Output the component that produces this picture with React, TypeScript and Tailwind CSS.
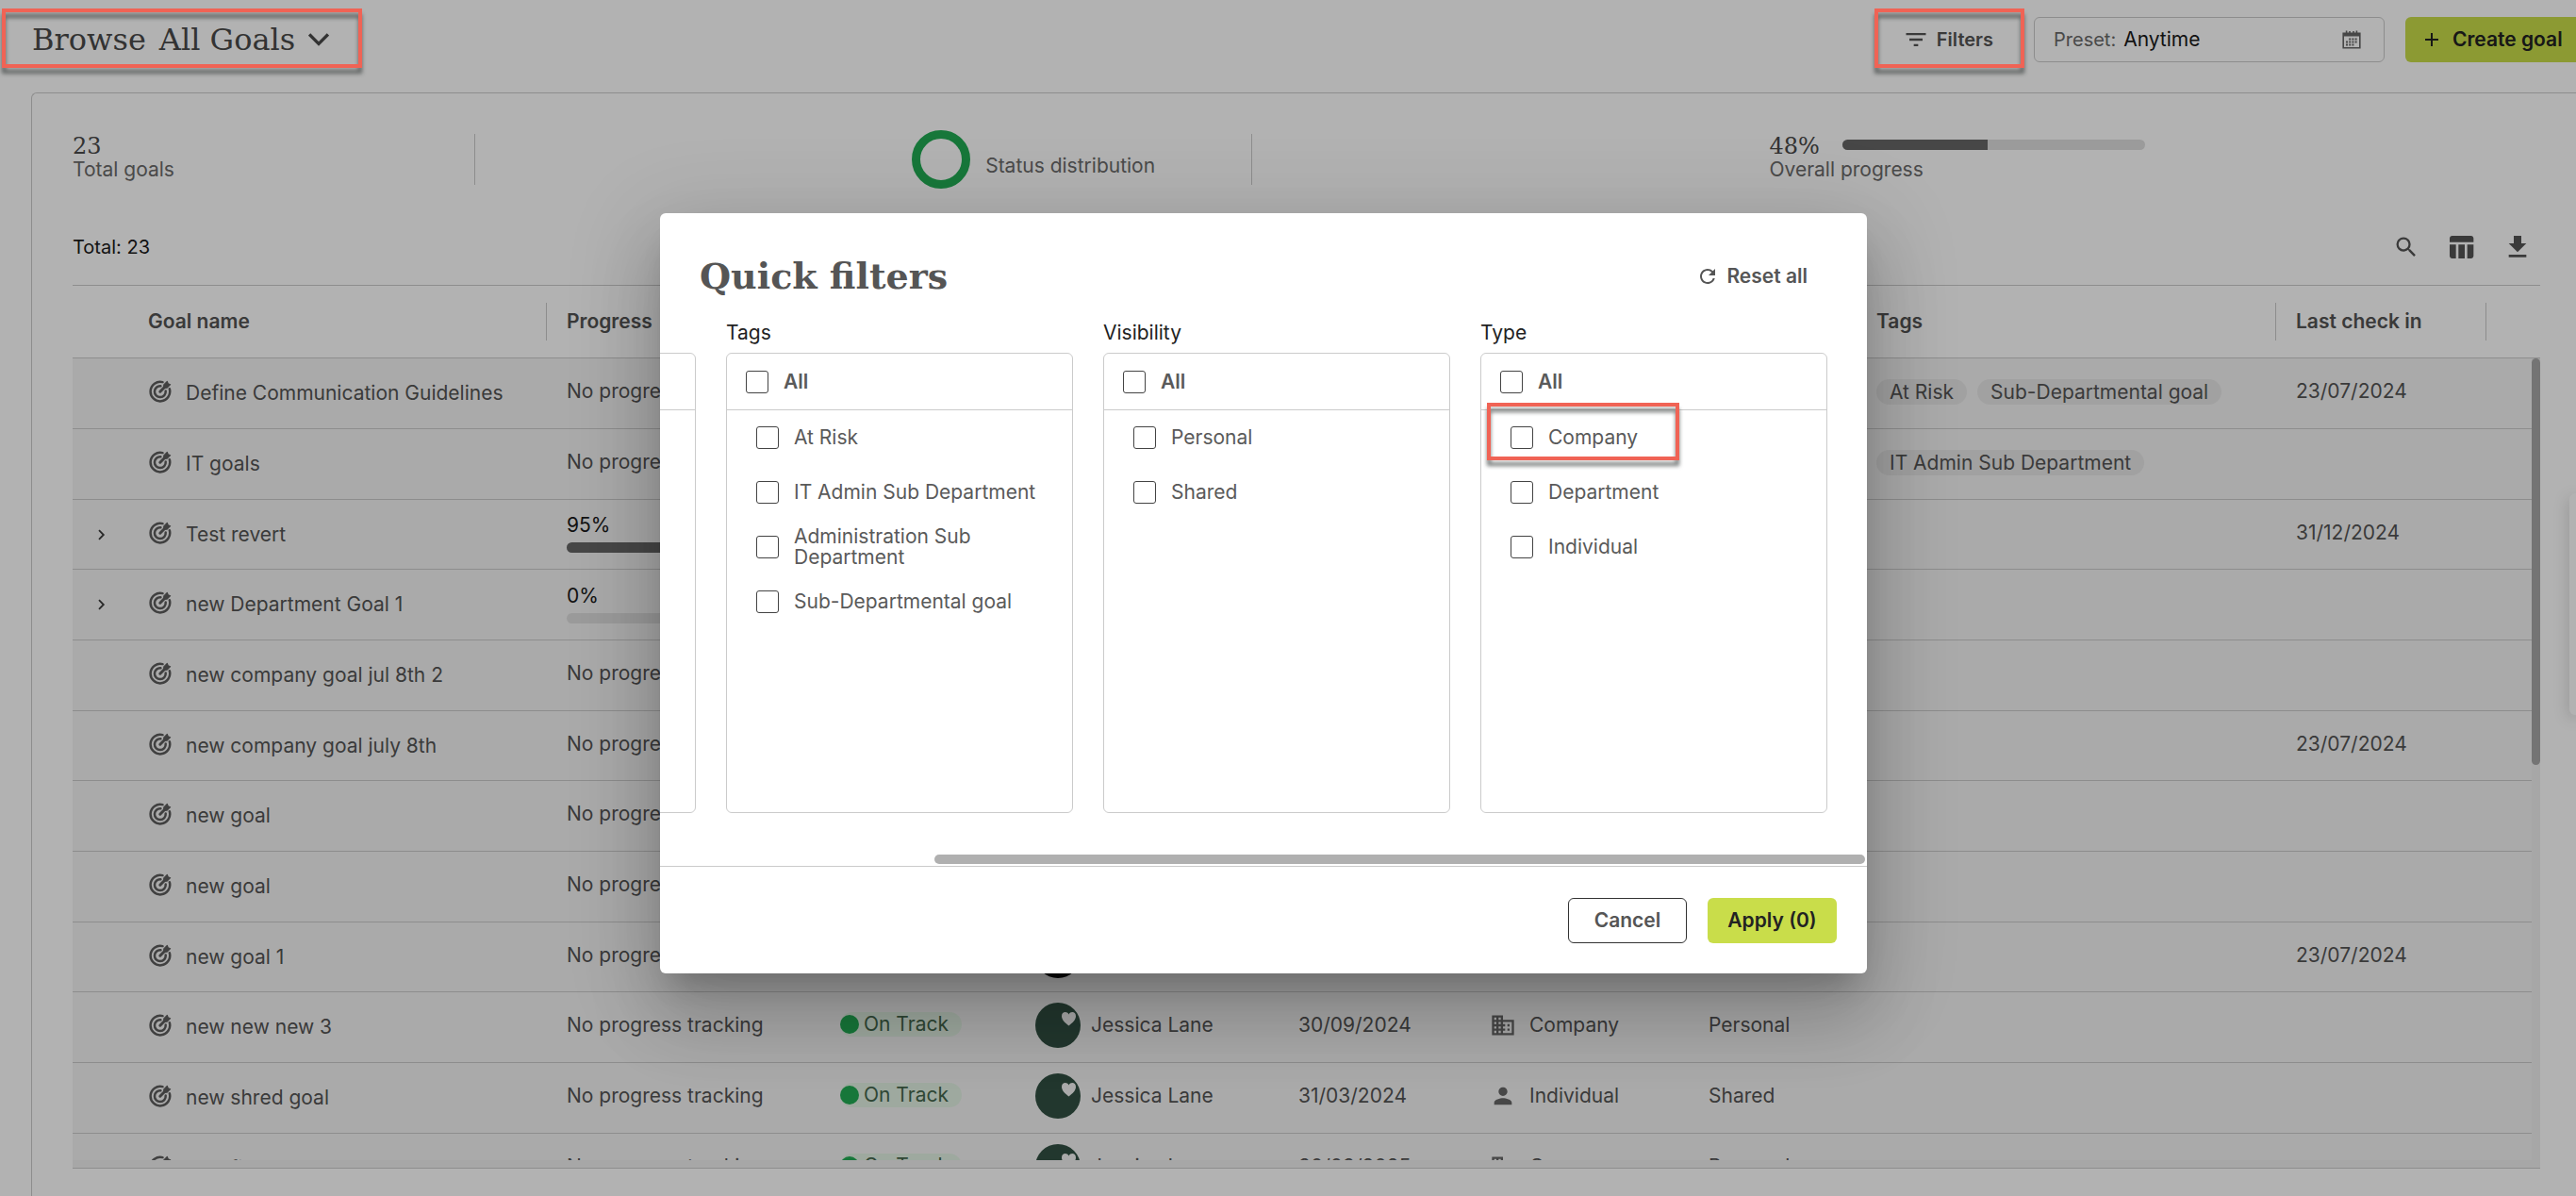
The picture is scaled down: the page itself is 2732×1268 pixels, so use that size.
import React from 'react';
import {
  MdAdd,
  MdBusiness,
  MdFileDownload,
  MdFilterList,
  MdPerson,
  MdRefresh,
  MdSearch,
  MdTableChart,
} from 'react-icons/md';

type Goal = {
  name: string;
  progress?: number;
  expandable?: boolean;
  owner?: 'dark' | 'green';
  status?: string;
  dueDate?: string;
  type?: 'Company' | 'Individual';
  visibility?: string;
  tags?: string[];
  lastCheckIn?: string;
};

const GOALS: Goal[] = [
  { name: 'Define Communication Guidelines', tags: ['At Risk', 'Sub-Departmental goal'], lastCheckIn: '23/07/2024' },
  { name: 'IT goals', tags: ['IT Admin Sub Department'] },
  { name: 'Test revert', progress: 95, expandable: true, lastCheckIn: '31/12/2024' },
  { name: 'new Department Goal 1', progress: 0, expandable: true },
  { name: 'new company goal jul 8th 2' },
  { name: 'new company goal july 8th', lastCheckIn: '23/07/2024' },
  { name: 'new goal' },
  { name: 'new goal' },
  { name: 'new goal 1', owner: 'dark', lastCheckIn: '23/07/2024' },
  { name: 'new new new 3', owner: 'green', status: 'On Track', dueDate: '30/09/2024', type: 'Company', visibility: 'Personal' },
  { name: 'new shred goal', owner: 'green', status: 'On Track', dueDate: '31/03/2024', type: 'Individual', visibility: 'Shared' },
  { name: 'new first goal', owner: 'green', status: 'On Track', dueDate: '30/09/2025', type: 'Company', visibility: 'Personal' },
];

const COLUMNS = [
  { label: '', width: 'w-[59px]' },
  { label: 'Goal name', width: 'w-[444px]' },
  { label: 'Progress', width: 'w-[290px]' },
  { label: 'Status', width: 'w-[207px]' },
  { label: 'Owner', width: 'w-[279px]' },
  { label: 'Due date', width: 'w-[206px]' },
  { label: 'Type', width: 'w-[229px]' },
  { label: 'Visibility', width: 'w-[178px]' },
  { label: 'Tags', width: 'w-[445px]' },
  { label: 'Last check in', width: 'w-[223px]' },
  { label: '', width: 'w-[57px]' },
];

const FILTERS = [
  { title: 'Tags', options: ['At Risk', 'IT Admin Sub Department', 'Administration Sub Department', 'Sub-Departmental goal'] },
  { title: 'Visibility', options: ['Personal', 'Shared'] },
  { title: 'Type', options: ['Company', 'Department', 'Individual'] },
];

const SERIF = "font-['DejaVu_Serif',serif]";

const GoalIcon: React.FC = () => (
  <svg className="size-6 shrink-0 text-[#5c5c5c]" viewBox="0 0 24 24" fill="none" stroke="currentColor" strokeWidth="2.5" strokeLinecap="round">
    <path d="M14.5 2.1A10.3 10.3 0 1 0 21.8 9.2" />
    <path d="M12.4 6.3A5.9 5.9 0 1 0 17.7 11.6" />
    <path d="M11.8 12.2 17.5 6.5" strokeWidth="3" />
    <path d="M15.8 7.8V4.9L19.3 1.4 20.2 3.8 22.6 4.7 19.1 8.2H16.2z" fill="currentColor" strokeWidth="1.2" strokeLinejoin="round" />
  </svg>
);

const CalendarIcon: React.FC = () => (
  <svg className="size-5" viewBox="0 0 20 20" fill="none" stroke="currentColor">
    <path d="M1.2 3.4h17.6v15.4H1.2z" strokeWidth="1.6" />
    <path d="M1 4.8h18" strokeWidth="3.4" />
    <path d="M4.6 .4v4M15.4 .4v4M8 .9v3M12 .9v3" strokeWidth="1.6" />
    <path d="M7.2 9.4h9.4M4 12.4h12.6M4 15.4h9.4" strokeWidth="2" strokeDasharray="2 1.2" />
  </svg>
);

const Chevron: React.FC<{ className: string; d: string }> = ({ className, d }) => (
  <svg className={className} viewBox="0 0 20 20" fill="none" stroke="currentColor" strokeWidth="3">
    <path d={d} />
  </svg>
);

const Avatar: React.FC<{ tone: 'dark' | 'green' }> = ({ tone }) => (
  <svg className="size-12 shrink-0" viewBox="0 0 48 48">
    <circle cx="24" cy="24" r="24" fill={tone === 'green' ? '#315042' : '#0c0c0c'} />
    {tone === 'green' && (
      <path d="M35.5 24.5C31.5 21.2 28 18.2 28 14.2c0-4.8 5.6-5.4 7.5-1.8 1.9-3.6 7.5-3 7.5 1.8 0 4-3.5 7-7.5 10.3z" fill="#f4f4f4" />
    )}
  </svg>
);

const ProgressCell: React.FC<{ value?: number }> = ({ value }) => {
  if (value === undefined) return <>No progress tracking</>;
  return (
    <div className="flex flex-col gap-2 pt-1 text-[#1a1a1a]">
      <span className="leading-5">{value}%</span>
      <div className="h-[11px] w-[240px] overflow-hidden rounded-full bg-[#dedede]">
        <div className="h-full bg-[#666]" style={{ width: `${value}%` }} />
      </div>
    </div>
  );
};

const GoalRow: React.FC<{ goal: Goal }> = ({ goal }) => (
  <tr className="h-[75px] [&:nth-child(3n)]:h-[74px] border-b border-[#cbcbcb] bg-[#f4f4f4] [&>td]:pb-[3px]">
    <td className="pl-[25px]">
      {goal.expandable && (
        <button type="button" aria-label={`Expand ${goal.name}`} className="block pt-1">
          <Chevron className="w-3 h-3 text-[#3c3c3c]" d="M5 2l8 8-8 8" />
        </button>
      )}
    </td>
    <td className="pl-[22px]">
      <div className="flex items-center gap-[15px]">
        <GoalIcon />
        <span className="pt-1">{goal.name}</span>
      </div>
    </td>
    <td className="pl-[21px]"><ProgressCell value={goal.progress} /></td>
    <td className="pl-[21px]">
      {goal.status && (
        <span className="inline-flex h-[26px] items-center gap-[5px] rounded-full bg-[#e3f3e4] pr-[14px] text-[#44664c]">
          <span className="size-5 rounded-full bg-[#22ab54]" />
          {goal.status}
        </span>
      )}
    </td>
    <td className="pl-[21px]">
      {goal.owner && (
        <div className="flex items-center gap-[11px]">
          <Avatar tone={goal.owner} />
          {goal.status && 'Jessica Lane'}
        </div>
      )}
    </td>
    <td className="pl-[21px]">{goal.dueDate}</td>
    <td className="pl-[18px]">
      {goal.type && (
        <div className="flex items-center gap-[14px]">
          {goal.type === 'Company' ? <MdBusiness className="size-7 text-[#666]" /> : <MdPerson className="size-7 text-[#666]" />}
          {goal.type}
        </div>
      )}
    </td>
    <td className="pl-[21px]">{goal.visibility}</td>
    <td className="pl-[21px]">
      <div className="flex gap-[11px]">
        {goal.tags?.map(tag => (
          <span key={tag} className="h-[27px] rounded-full bg-[#e7e7e7] px-[14px] leading-[27px]">{tag}</span>
        ))}
      </div>
    </td>
    <td className="pl-[21px]">{goal.lastCheckIn}</td>
    <td />
  </tr>
);

const GoalsTable: React.FC = () => (
  <div className="relative flex-1 min-h-0 border-y border-[#cbcbcb] pb-2 bg-[#f0f0f0]">
    <div className="h-full overflow-hidden">
      <table className="w-full table-fixed border-collapse whitespace-nowrap text-left text-[#545454]">
        <thead>
          <tr className="h-[76px] border-b border-[#cbcbcb] bg-white">
            {COLUMNS.map((col, i) => (
              <th key={i} className={`${col.width} p-0 font-semibold`}>
                <div
                  className={`flex h-10 items-center pl-[21px] ${
                    i > 0 && i < COLUMNS.length - 1 ? 'border-r border-[#cbcbcb]' : ''
                  }`}
                >
                  {col.label}
                </div>
              </th>
            ))}
          </tr>
        </thead>
        <tbody>
          {GOALS.map((goal, i) => <GoalRow key={i} goal={goal} />)}
        </tbody>
      </table>
    </div>
    {/* scrollbar */}
    <div className="absolute right-0 top-[77px] bottom-0 w-[9px] bg-[#f0f0f0]">
      <div className="h-[431px] rounded-full bg-[#a7a7a7]" />
    </div>
  </div>
);

const Header: React.FC = () => (
  <header className="flex h-[98px] shrink-0 justify-between pl-[34px] pt-[18px]">
    <button type="button" className={`flex h-12 items-center text-[32px] text-[#4a4a4a] ${SERIF}`}>
      <span>Browse</span>
      <span className="ml-[14px]">All Goals</span>
      <Chevron className="ml-[14px] w-[22px] h-[22px] text-[#4a4a4a]" d="M1 5l9 9 9-9" />
    </button>
    <div className="flex h-12 shrink-0 text-[20px]">
      <button type="button" className="mr-[43px] flex items-center gap-2 font-semibold text-[#545454]">
        <MdFilterList className="size-7" />
        Filters
      </button>
      <button type="button" className="mr-[22px] flex w-[372px] items-center rounded-md border border-[#cbcbcb] px-5">
        <span className="text-[#6a6a6a]">Preset:</span>
        <span className="ml-2 text-[21px] text-[#1a1a1a]">Anytime</span>
        <span className="ml-auto mr-1 text-[#666]"><CalendarIcon /></span>
      </button>
      <button type="button" className="-mr-2 flex w-[189px] shrink-0 items-center gap-[10px] rounded-md bg-[#c9dd4a] pl-4 text-[21px] font-semibold text-[#222]">
        <MdAdd className="size-6" />
        Create goal
      </button>
    </div>
  </header>
);

const Stats: React.FC = () => (
  <section className="grid grid-cols-[427fr_824fr_1365fr] h-[54px] shrink-0 text-[#6a6a6a]">
    <div className="flex flex-col border-r border-[#cbcbcb]">
      <span className={`text-[24px] leading-[26px] text-[#4a4a4a] ${SERIF}`}>23</span>
      <span className="leading-6">Total goals</span>
    </div>
    <div className="flex items-center gap-4 border-r border-[#cbcbcb] pl-[463px]">
      <svg className="-my-1 size-[62px]" viewBox="0 0 62 62">
        <circle cx="31" cy="31" r="26.5" fill="none" stroke="#22ab54" strokeWidth="9" />
      </svg>
      <span className="pt-[14px]">Status distribution</span>
    </div>
    <div className="flex flex-col pl-[548px]">
      <div className="flex h-[26px] items-center gap-6">
        <span className={`text-[24px] leading-[26px] text-[#4a4a4a] ${SERIF}`}>48%</span>
        <div className="mb-1 h-[11px] w-[321px] overflow-hidden rounded-full bg-[#dedede]">
          <div className="h-full w-[48%] bg-[#666]" />
        </div>
      </div>
      <span className="leading-6">Overall progress</span>
    </div>
  </section>
);

const Checkbox: React.FC<{ label: string; bold?: boolean }> = ({ label, bold }) => (
  <label className={`flex items-center gap-4 leading-[22px] text-[#5a5a5a] ${bold ? 'font-semibold' : ''}`}>
    <input type="checkbox" className="size-6 shrink-0 appearance-none rounded-[3px] border border-[#444] bg-white checked:bg-[#c9dd4a]" />
    {label}
  </label>
);

const Highlight: React.FC<{ className: string }> = ({ className }) => (
  <span className={`pointer-events-none absolute border-4 border-[#f06355] drop-shadow-[0_6px_2px_rgba(60,66,64,0.7)] ${className}`} />
);

const FilterList: React.FC<{ title?: string; options?: string[] }> = ({ title, options = [] }) => (
  <fieldset className="w-[368px] shrink-0">
    <legend className="mb-2 h-6 leading-[22px] text-[#222]">{title}</legend>
    <div className="h-[488px] rounded-md border border-[#cbcbcb]">
      <div className="flex h-[60px] items-center border-b border-[#cbcbcb] pl-5">
        {title && <Checkbox label="All" bold />}
      </div>
      {options.map(option => (
        <div key={option} className="relative flex h-[58px] items-center pl-[31px] pr-4">
          <Checkbox label={option} />
          {option === 'Company' && <Highlight className="-top-2 left-[6px] h-[61px] w-[204px]" />}
        </div>
      ))}
    </div>
  </fieldset>
);

const QuickFilters: React.FC = () => (
  <div
    role="dialog"
    aria-label="Quick filters"
    className="flex w-[1280px] flex-col rounded-md bg-white shadow-[0_22px_30px_-14px_rgba(0,0,0,0.2),0_48px_76px_6px_rgba(0,0,0,0.14),0_18px_92px_16px_rgba(0,0,0,0.12)]"
  >
    <div className="flex items-center justify-between pl-[42px] pr-[63px] pt-[42px]">
      <h2 className={`text-[38px] leading-[50px] font-bold text-[#555] ${SERIF}`}>Quick filters</h2>
      <button type="button" className="flex items-center gap-2 font-semibold text-[#555]">
        <MdRefresh className="size-6" />
        Reset all
      </button>
    </div>
    <div className="flex justify-end gap-8 overflow-hidden pr-[42px] pt-[24px]">
      <FilterList />
      {FILTERS.map(filter => <FilterList key={filter.title} {...filter} />)}
    </div>
    <div className="mt-11 flex justify-end border-b border-[#cbcbcb] pb-[2px] pr-[2px]">
      <div className="h-[10px] w-[987px] rounded-full bg-[#b0b0b0]" />
    </div>
    <div className="flex justify-end gap-[22px] pb-8 pr-8 pt-[33px]">
      <button type="button" className="h-12 w-[126px] rounded-md border border-[#333] font-semibold text-[#555]">Cancel</button>
      <button type="button" className="h-12 w-[137px] rounded-md bg-[#c9dd4a] font-semibold text-[#222]">Apply (0)</button>
    </div>
  </div>
);

const App: React.FC = () => {
  return (
    <div className="relative h-screen overflow-hidden bg-white font-['Inter','Liberation_Sans',sans-serif] text-[21px] leading-6">
      <div className="flex h-full flex-col">
        <Header />
        <main className="ml-[33px] flex min-h-0 flex-1 flex-col rounded-tl-md border-l border-t border-[#cbcbcb] pb-[29px] pl-[43px] pr-[38px] pt-[43px]">
          <Stats />
          <div className="flex h-[106px] shrink-0 items-center justify-between pt-[26px]">
            <span className="text-[20px] text-[#1a1a1a]">Total: 23</span>
            <div className="flex items-center gap-7 pr-2 text-[#545454]">
              <button type="button" aria-label="Search"><MdSearch className="size-7" /></button>
              <button type="button" aria-label="Columns"><MdTableChart className="size-8" /></button>
              <button type="button" aria-label="Download"><MdFileDownload className="size-8" /></button>
            </div>
          </div>
          <GoalsTable />
        </main>
      </div>
      <div className="absolute right-0 top-[523px] h-[235px] w-[7px] rounded-l-md bg-white shadow-[0_4px_16px_rgba(0,0,0,0.25)]" />
      <div className="absolute inset-0 flex items-center justify-center bg-black/30 pb-[10px] pr-[52px]">
        <QuickFilters />
      </div>
      <Highlight className="left-[2px] top-[9px] h-[63px] w-[382px]" />
      <Highlight className="right-[585px] top-[9px] h-[63px] w-[159px]" />
    </div>
  );
};

export default App;
